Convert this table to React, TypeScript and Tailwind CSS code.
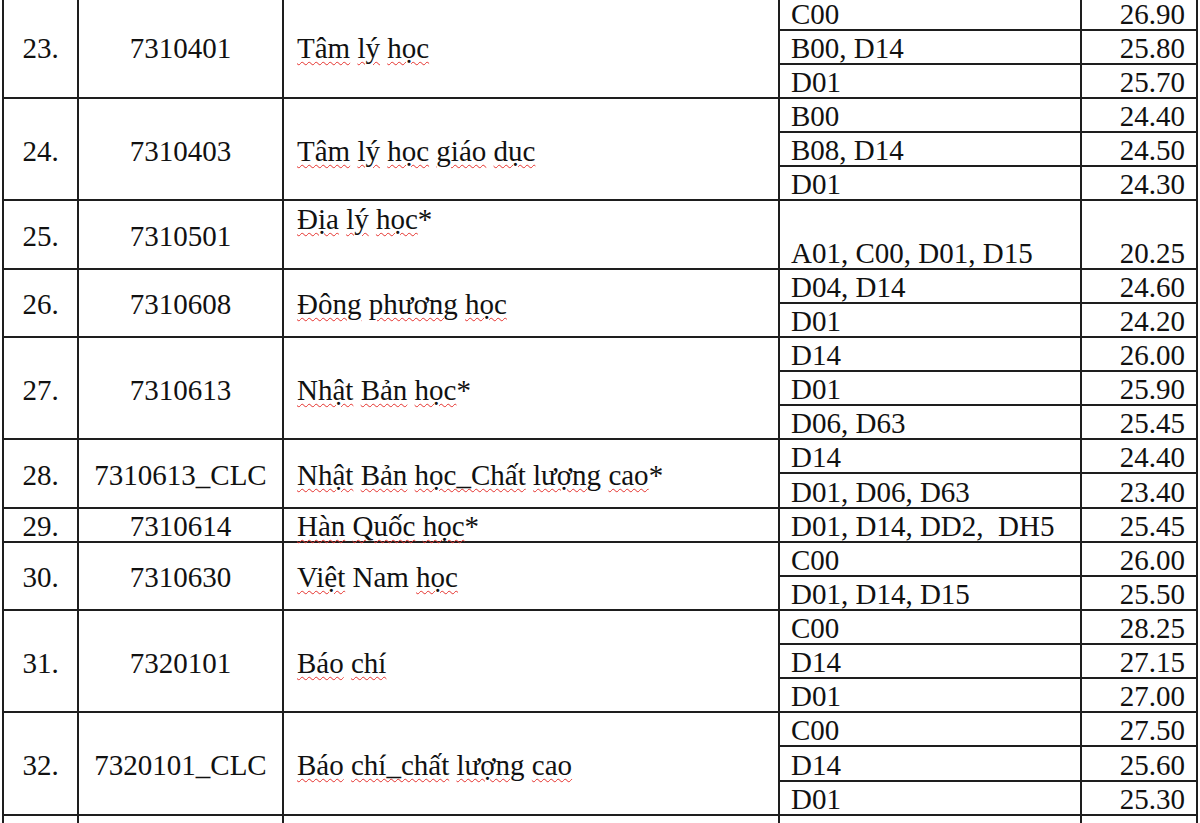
type Row = {
  no: string;
  code: string;
  name: string;
  subs: [string, string][];
  tall?: boolean;
};

const rows: Row[] = [
  { no: "23.", code: "7310401", name: "Tâm lý học", subs: [["C00", "26.90"], ["B00, D14", "25.80"], ["D01", "25.70"]] },
  { no: "24.", code: "7310403", name: "Tâm lý học giáo dục", subs: [["B00", "24.40"], ["B08, D14", "24.50"], ["D01", "24.30"]] },
  { no: "25.", code: "7310501", name: "Địa lý học*", subs: [["A01, C00, D01, D15", "20.25"]], tall: true },
  { no: "26.", code: "7310608", name: "Đông phương học", subs: [["D04, D14", "24.60"], ["D01", "24.20"]] },
  { no: "27.", code: "7310613", name: "Nhật Bản học*", subs: [["D14", "26.00"], ["D01", "25.90"], ["D06, D63", "25.45"]] },
  { no: "28.", code: "7310613_CLC", name: "Nhật Bản học_Chất lượng cao*", subs: [["D14", "24.40"], ["D01, D06, D63", "23.40"]] },
  { no: "29.", code: "7310614", name: "Hàn Quốc học*", subs: [["D01, D14, DD2,  DH5", "25.45"]] },
  { no: "30.", code: "7310630", name: "Việt Nam học", subs: [["C00", "26.00"], ["D01, D14, D15", "25.50"]] },
  { no: "31.", code: "7320101", name: "Báo chí", subs: [["C00", "28.25"], ["D14", "27.15"], ["D01", "27.00"]] },
  { no: "32.", code: "7320101_CLC", name: "Báo chí_chất lượng cao", subs: [["C00", "27.50"], ["D14", "25.60"], ["D01", "25.30"]] },
  { no: "", code: "", name: "", subs: [["", ""]] },
];

// words Word's spell checker left alone
const known = ["Nam"];

const Name = ({ text }: { text: string }) => {
  const words = text.split(" ").filter(Boolean);
  return (
    <span>
      {words.map((w, i) => {
        const star = w.endsWith("*");
        const base = star ? w.slice(0, -1) : w;
        return (
          <span key={i}>
            {i > 0 && " "}
            {known.includes(base) ? (
              base
            ) : (
              <span className="underline decoration-wavy decoration-[#e5322d] decoration-1 underline-offset-[3px]">
                {base}
              </span>
            )}
            {star && "*"}
          </span>
        );
      })}
    </span>
  );
};

export default function App() {
  return (
    <div className="w-[1200px] h-[823px] overflow-hidden bg-white text-[#111] [font-family:'Liberation_Serif','Times_New_Roman',serif] text-[29px] leading-[32px]">
      <div className="-mt-[3.4px] ml-[2px] w-[1196px] border-l-2 border-[#1e1e1e]">
        {rows.map((row, r) => (
          <div key={r} className="flex">
            <div className="w-[75px] shrink-0 flex items-center justify-center pt-[3px] leading-[28px] border-r-2 border-b-2 border-[#1e1e1e]">
              {row.no}
            </div>
            <div className="w-[205px] shrink-0 flex items-center justify-center pt-[3px] leading-[28px] border-r-2 border-b-2 border-[#1e1e1e]">
              {row.code}
            </div>
            <div
              className={
                row.tall
                  ? "w-[496px] shrink-0 flex items-start pl-[13px] pt-[2px] border-r-2 border-b-2 border-[#1e1e1e]"
                  : "w-[496px] shrink-0 flex items-center pl-[13px] pt-[3px] leading-[28px] border-r-2 border-b-2 border-[#1e1e1e]"
              }
            >
              <Name text={row.name} />
            </div>
            <div className="flex-1 flex flex-col">
              {row.subs.map(([combo, score], i) => (
                <div
                  key={i}
                  className={
                    row.tall
                      ? "flex h-[68.28px] border-b-2 border-[#1e1e1e] leading-[30px]"
                      : "flex h-[34.14px] border-b-2 border-[#1e1e1e] leading-[30px]"
                  }
                >
                  <div className="w-[302px] shrink-0 flex items-end pl-[11px] whitespace-pre border-r-2 border-[#1e1e1e]">
                    {combo}
                  </div>
                  <div className="flex-1 flex items-end justify-end pr-[11px] border-r-2 border-[#1e1e1e]">
                    {score}
                  </div>
                </div>
              ))}
            </div>
          </div>
        ))}
      </div>
    </div>
  );
}
